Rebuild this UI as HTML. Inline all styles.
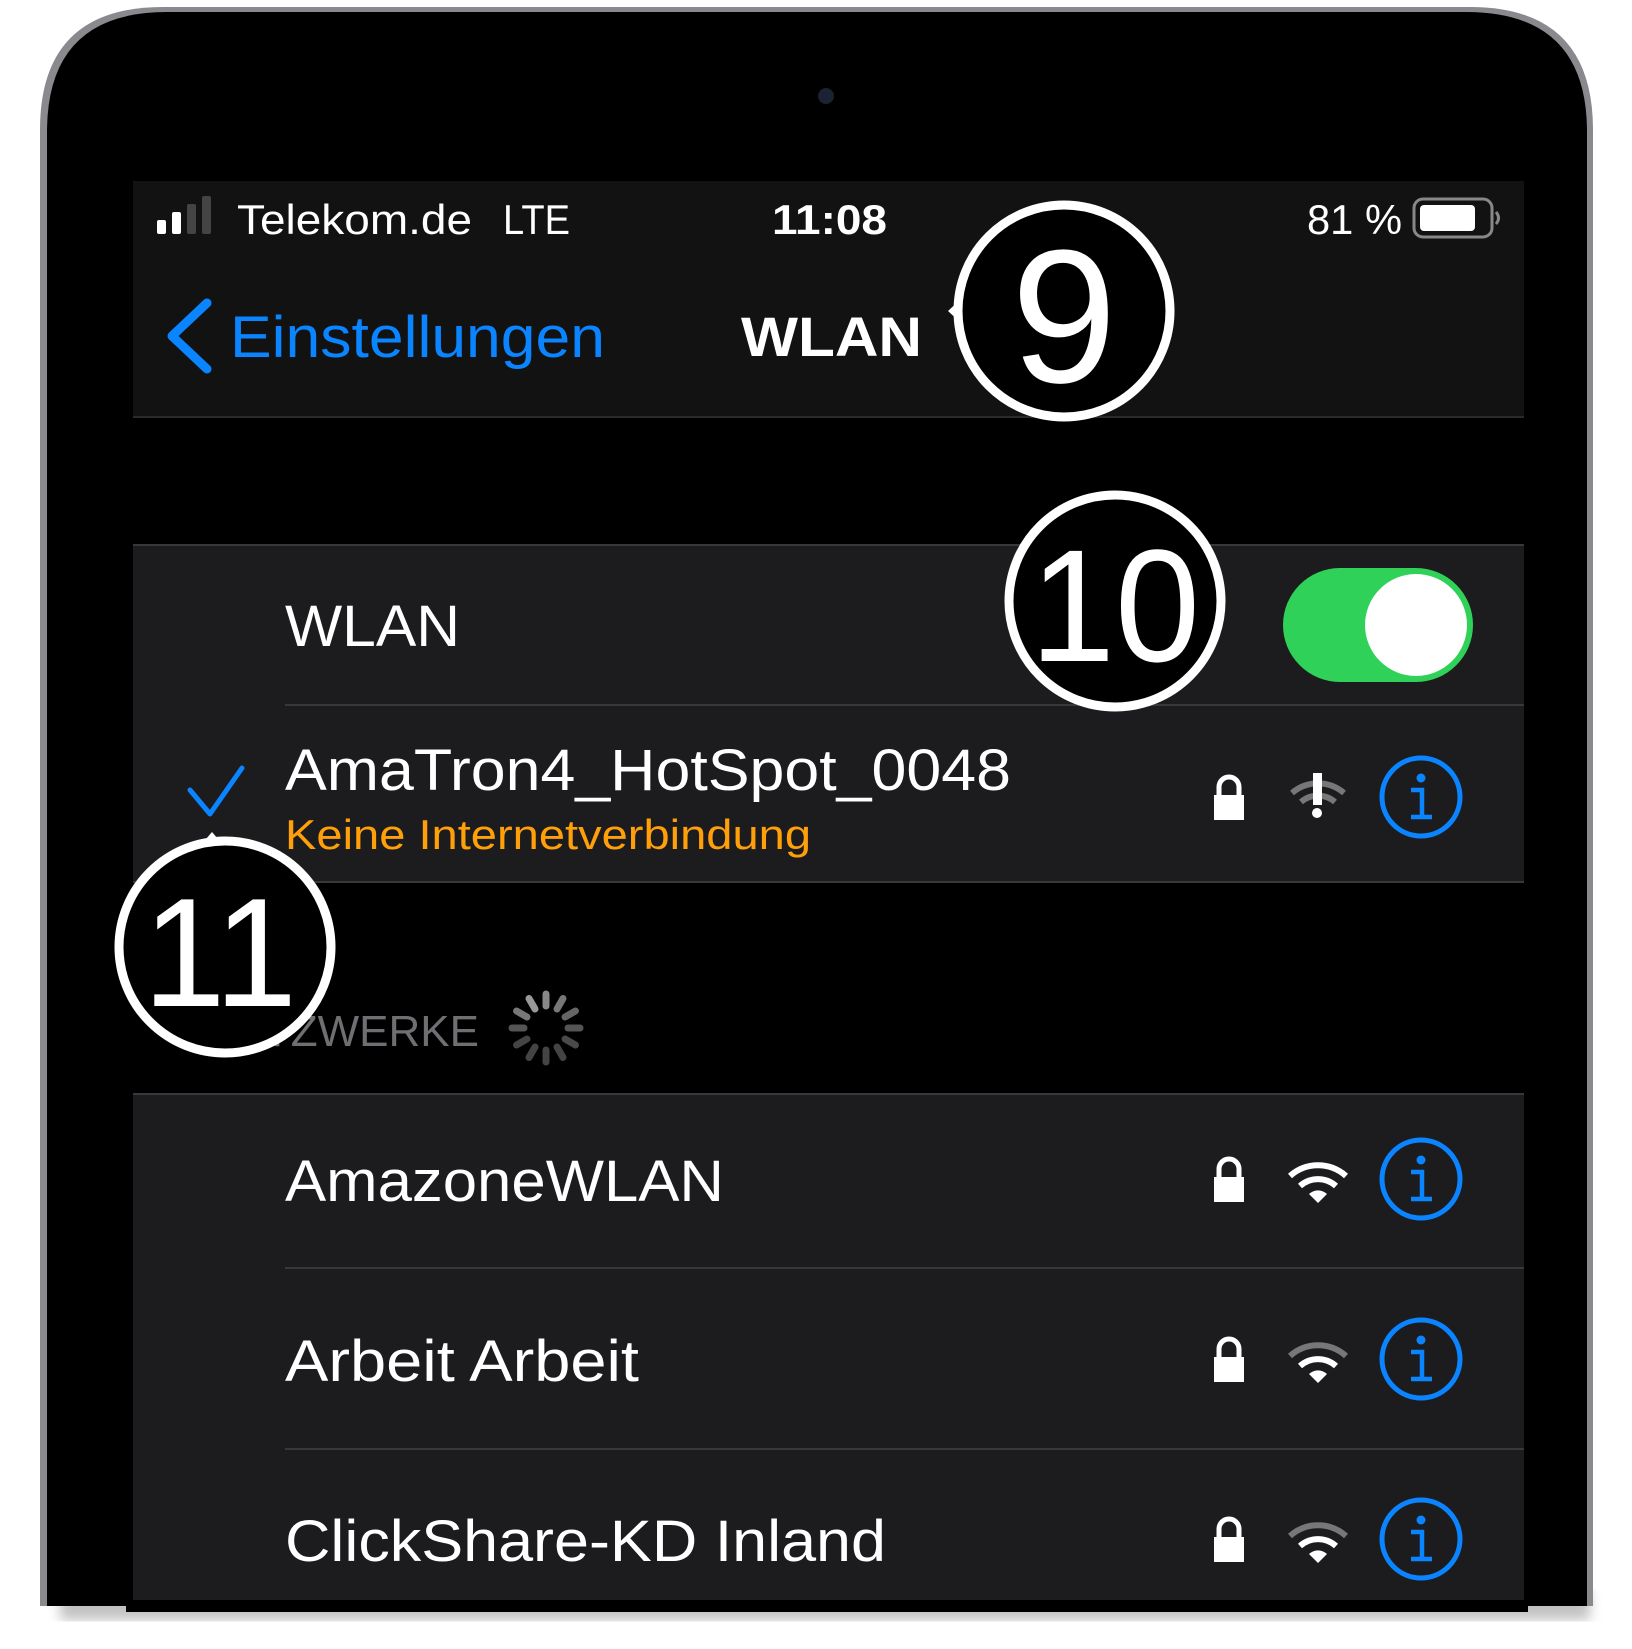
<!DOCTYPE html>
<html><head><meta charset="utf-8"><style>
html,body{margin:0;padding:0;background:#fff;width:1632px;height:1649px;overflow:hidden}
svg{display:block}
text{font-family:"Liberation Sans",sans-serif}
</style></head><body>
<svg width="1632" height="1649" viewBox="0 0 1632 1649" xmlns="http://www.w3.org/2000/svg">
<defs>
<filter id="sh" x="-5%" y="-5%" width="110%" height="110%"><feGaussianBlur stdDeviation="6"/></filter>
</defs>
<rect width="1632" height="1649" fill="#fff"/>
<rect x="60" y="1590" width="1530" height="30" fill="#999" filter="url(#sh)" opacity="0.6"/>
<path d="M40 1606 L40 130 Q40 7 163 7 L1470 7 Q1593 7 1593 130 L1593 1606 Z" fill="#8a8a8e"/>
<path d="M47 1606 L47 132 Q47 12 167 12 L1466 12 Q1587 12 1587 132 L1587 1606 Z" fill="#000"/>
<circle cx="826" cy="96" r="8" fill="#1b2233"/>
<rect x="126" y="1600" width="1402" height="12" fill="#000"/>
<rect x="133" y="181" width="1391" height="237" fill="#121212"/>
<rect x="133" y="416" width="1391" height="2" fill="#2a2a2c"/>
<rect x="157" y="220" width="9" height="14" rx="2" fill="#fff"/>
<rect x="172" y="212" width="9" height="22" rx="2" fill="#fff"/>
<rect x="187" y="204" width="9" height="30" rx="2" fill="#444"/>
<rect x="202" y="196" width="9" height="38" rx="2" fill="#444"/>
<text x="237" y="234" font-size="42" fill="#fff" textLength="235" lengthAdjust="spacingAndGlyphs">Telekom.de</text>
<text x="503" y="234" font-size="42" fill="#fff" textLength="67" lengthAdjust="spacingAndGlyphs">LTE</text>
<text x="772" y="234" font-size="42" font-weight="bold" fill="#fff" textLength="115" lengthAdjust="spacingAndGlyphs">11:08</text>
<text x="1307" y="234" font-size="42" fill="#fff" textLength="95" lengthAdjust="spacingAndGlyphs">81 %</text>
<rect x="1414" y="199" width="78" height="38" rx="9" fill="none" stroke="#888" stroke-width="3"/>
<rect x="1420" y="205" width="55" height="26" rx="4" fill="#fff"/>
<path d="M1496 212 q5 6 0 12" stroke="#888" stroke-width="3" fill="none"/>
<path d="M207 303 L172 336 L207 369" stroke="#0a84ff" stroke-width="9" fill="none" stroke-linecap="round" stroke-linejoin="round"/>
<text x="230" y="357" font-size="58" fill="#0a84ff" textLength="375" lengthAdjust="spacingAndGlyphs">Einstellungen</text>
<text x="741" y="356" font-size="56" font-weight="bold" fill="#fff" textLength="181" lengthAdjust="spacingAndGlyphs">WLAN</text>
<rect x="133" y="545" width="1391" height="338" fill="#1c1c1e"/>
<rect x="133" y="544" width="1391" height="2" fill="#38383a"/>
<rect x="133" y="881" width="1391" height="2" fill="#38383a"/>
<rect x="285" y="704" width="1239" height="2" fill="#38383a"/>
<text x="285" y="646" font-size="58" fill="#fff" textLength="175" lengthAdjust="spacingAndGlyphs">WLAN</text>
<rect x="1283" y="568" width="190" height="114" rx="57" fill="#30d158"/>
<circle cx="1416" cy="625" r="51" fill="#fff"/>
<path d="M190 790 L210 814 L242 768" stroke="#0a84ff" stroke-width="5" fill="none" stroke-linecap="round" stroke-linejoin="round"/>
<text x="285" y="790" font-size="58" fill="#fff" textLength="726" lengthAdjust="spacingAndGlyphs">AmaTron4_HotSpot_0048</text>
<text x="285" y="849" font-size="42" fill="#ff9f0a" textLength="526" lengthAdjust="spacingAndGlyphs">Keine Internetverbindung</text>
<path d="M1219 795 v-8 a10 10 0 0 1 20 0 v8" stroke="#fff" stroke-width="5" fill="none"/><rect x="1214" y="795" width="30" height="25" fill="#fff"/>
<path d="M1292 793 a40 40 0 0 1 52 0 M1301 802 a26 26 0 0 1 34 0" stroke="#777" stroke-width="6" fill="none"/>
<rect x="1313" y="773" width="9" height="32" fill="#fff"/><circle cx="1317" cy="813" r="5" fill="#fff"/>
<circle cx="1421" cy="797" r="39" fill="none" stroke="#0a84ff" stroke-width="5"/>
<circle cx="1421" cy="778" r="4.5" fill="#0a84ff"/>
<path d="M1411 790 h11 v27 M1411 817 h21" stroke="#0a84ff" stroke-width="4.5" fill="none"/>
<text x="479" y="1046" font-size="44" fill="#6e6e73" text-anchor="end">NETZWERKE</text>
<g transform="translate(546 1028)" stroke-width="7" stroke-linecap="round">
<line x1="0" y1="-22" x2="0" y2="-34" stroke="#888"/>
<line x1="0" y1="-22" x2="0" y2="-34" stroke="#777" transform="rotate(30)"/>
<line x1="0" y1="-22" x2="0" y2="-34" stroke="#666" transform="rotate(60)"/>
<line x1="0" y1="-22" x2="0" y2="-34" stroke="#555" transform="rotate(90)"/>
<line x1="0" y1="-22" x2="0" y2="-34" stroke="#4a4a4a" transform="rotate(120)"/>
<line x1="0" y1="-22" x2="0" y2="-34" stroke="#444" transform="rotate(150)"/>
<line x1="0" y1="-22" x2="0" y2="-34" stroke="#444" transform="rotate(180)"/>
<line x1="0" y1="-22" x2="0" y2="-34" stroke="#444" transform="rotate(210)"/>
<line x1="0" y1="-22" x2="0" y2="-34" stroke="#444" transform="rotate(240)"/>
<line x1="0" y1="-22" x2="0" y2="-34" stroke="#555" transform="rotate(270)"/>
<line x1="0" y1="-22" x2="0" y2="-34" stroke="#777" transform="rotate(300)"/>
<line x1="0" y1="-22" x2="0" y2="-34" stroke="#999" transform="rotate(330)"/>
</g>
<rect x="133" y="1094" width="1391" height="506" fill="#1c1c1e"/>
<rect x="133" y="1093" width="1391" height="2" fill="#38383a"/>
<rect x="285" y="1267" width="1239" height="2" fill="#38383a"/>
<rect x="285" y="1448" width="1239" height="2" fill="#38383a"/>
<text x="285" y="1201" font-size="58" fill="#fff" textLength="439" lengthAdjust="spacingAndGlyphs">AmazoneWLAN</text>
<text x="285" y="1381" font-size="58" fill="#fff" textLength="354" lengthAdjust="spacingAndGlyphs">Arbeit Arbeit</text>
<text x="285" y="1561" font-size="58" fill="#fff" textLength="601" lengthAdjust="spacingAndGlyphs">ClickShare-KD Inland</text>
<g transform="translate(0 382)">
<path d="M1219 795 v-8 a10 10 0 0 1 20 0 v8" stroke="#fff" stroke-width="5" fill="none"/><rect x="1214" y="795" width="30" height="25" fill="#fff"/>
<path d="M1290 794 a42 42 0 0 1 56 0 M1300 804 a27 27 0 0 1 36 0" stroke="#fff" stroke-width="6" fill="none"/><path d="M1309 812 l9 9 l9 -9 a13 13 0 0 0 -18 0z" fill="#fff"/>
<circle cx="1421" cy="797" r="39" fill="none" stroke="#0a84ff" stroke-width="5"/><circle cx="1421" cy="778" r="4.5" fill="#0a84ff"/><path d="M1411 790 h11 v27 M1411 817 h21" stroke="#0a84ff" stroke-width="4.5" fill="none"/>
</g>
<g transform="translate(0 562)">
<path d="M1219 795 v-8 a10 10 0 0 1 20 0 v8" stroke="#fff" stroke-width="5" fill="none"/><rect x="1214" y="795" width="30" height="25" fill="#fff"/>
<path d="M1290 794 a42 42 0 0 1 56 0" stroke="#777" stroke-width="6" fill="none"/><path d="M1300 804 a27 27 0 0 1 36 0" stroke="#fff" stroke-width="6" fill="none"/><path d="M1309 812 l9 9 l9 -9 a13 13 0 0 0 -18 0z" fill="#fff"/>
<circle cx="1421" cy="797" r="39" fill="none" stroke="#0a84ff" stroke-width="5"/><circle cx="1421" cy="778" r="4.5" fill="#0a84ff"/><path d="M1411 790 h11 v27 M1411 817 h21" stroke="#0a84ff" stroke-width="4.5" fill="none"/>
</g>
<g transform="translate(0 742)">
<path d="M1219 795 v-8 a10 10 0 0 1 20 0 v8" stroke="#fff" stroke-width="5" fill="none"/><rect x="1214" y="795" width="30" height="25" fill="#fff"/>
<path d="M1290 794 a42 42 0 0 1 56 0" stroke="#777" stroke-width="6" fill="none"/><path d="M1300 804 a27 27 0 0 1 36 0" stroke="#fff" stroke-width="6" fill="none"/><path d="M1309 812 l9 9 l9 -9 a13 13 0 0 0 -18 0z" fill="#fff"/>
<circle cx="1421" cy="797" r="39" fill="none" stroke="#0a84ff" stroke-width="5"/><circle cx="1421" cy="778" r="4.5" fill="#0a84ff"/><path d="M1411 790 h11 v27 M1411 817 h21" stroke="#0a84ff" stroke-width="4.5" fill="none"/>
</g>
<path d="M962 298 L948 311 L962 324 Z" fill="#fff"/>
<circle cx="1064" cy="311" r="106" fill="#000" stroke="#fff" stroke-width="9"/>
<text x="1064" y="382" font-size="190" fill="#fff" text-anchor="middle">9</text>
<path d="M1210 588 L1224 601 L1210 614 Z" fill="#fff"/>
<circle cx="1115" cy="601" r="106" fill="#000" stroke="#fff" stroke-width="9"/>
<text x="1115" y="661" font-size="160" fill="#fff" text-anchor="middle" textLength="170" lengthAdjust="spacingAndGlyphs">10</text>
<path d="M200 846 L212 832 L224 846 Z" fill="#fff"/>
<circle cx="225" cy="947" r="106" fill="#000" stroke="#fff" stroke-width="9"/>
<text x="220" y="1006" font-size="155" fill="#fff" text-anchor="middle" textLength="154" lengthAdjust="spacingAndGlyphs">11</text>
</svg>
</body></html>
